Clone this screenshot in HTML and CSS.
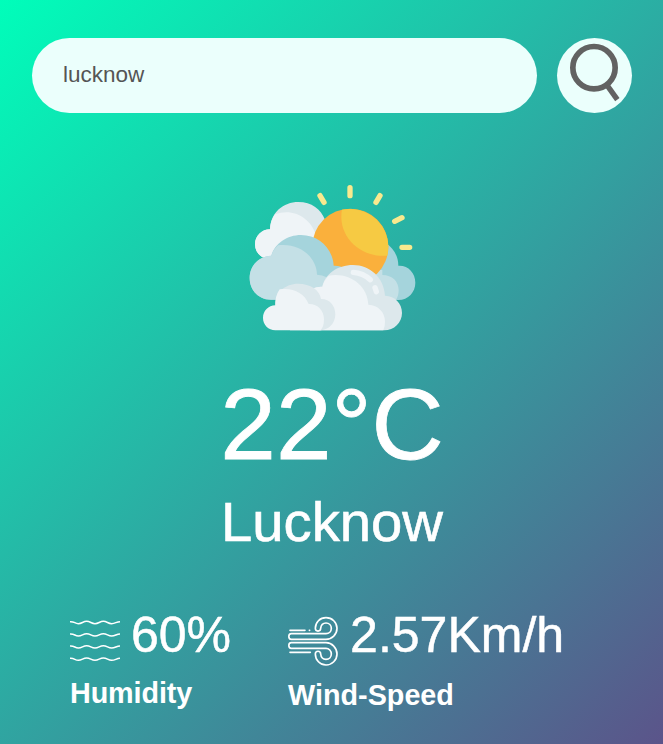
FILE: index.html
```html
<!DOCTYPE html>
<html lang="en">
<head>
<meta charset="utf-8">
<title>Weather</title>
<link rel="stylesheet" href="styles.css">
</head>
<body>
<main class="card">
  <div class="search">
    <input class="search-input" type="text" value="lucknow" aria-label="City" spellcheck="false">
    <button class="search-button" aria-label="Search">
      <svg viewBox="0 0 225 225" fill="none" stroke="#626262">
        <circle cx="111" cy="89" r="63.5" stroke-width="17"/>
        <path d="M151 143L181 185" stroke-width="16"/>
      </svg>
    </button>
  </div>
  <section class="weather">
    <svg class="weather-icon" viewBox="0 0 555 495">
      <g stroke="#f8e98e" stroke-width="16" stroke-linecap="round">
        <path d="M330 38V62M240 62L252 82M420 62L408 82M464 139L486 128M486 217H509"/>
      </g>
      <path fill="#dde8ec" d="M90 163C92 112 130 81 175 81C215 81 243 103 255 134L230 250H75C56 242 45 228 45 208C45 182 66 163 90 163Z"/>
      <path fill="#eff4f7" d="M90 163C91 145 96 130 105 118C157 98 211 126 228 180V250H75C56 242 45 228 45 208C45 182 66 163 90 163Z"/>
      <path fill="#a5d4dc" d="M435 203C460 217 475 243 475 272C504 270 526 293 526 323C526 351 505 375 475 375H400V203Z"/>
      <path fill="#c4e0e6" d="M427 285V300C457 300 476 320 476 345C476 357 473 367 468 375H400V285Z"/>
      <circle cx="331" cy="215" r="114" fill="#fab03c"/>
      <path fill="#f6ca43" d="M306 104C374 91 443 139 445 214Q445 229 442 242C365 249 304 192 304 126Q304 113 306 104Z"/>
      <path fill="#a5d4dc" d="M94 242C104 205 142 180 183 180C235 180 278 219 281 272Q301 271 315 281L300 374H93C57 374 29 347 29 309C29 271 58 243 94 242Z"/>
      <path fill="#c4e0e6" d="M94 242C98 229 105 219 114 211C180 203 230 247 231 299Q247 300 260 307L250 374H93C57 374 29 347 29 309C29 271 58 243 94 242Z"/>
      <path fill="#dde8ec" d="M217 341Q231 334 247 335C254 298 292 270 339 270C390 270 432 308 435 362C465 363 486 385 486 414C486 443 462 466 433 466H210Z"/>
      <path fill="#eff4f7" d="M217 341Q231 334 247 335Q252 315 266 302C329 291 383 332 385 389C415 390 435 412 435 440Q435 455 430 466H210Z"/>
      <path fill="#dde8ec" d="M106 391C105 352 136 326 174 326C212 326 239 345 243 372C268 371 286 391 286 418C286 446 265 466 239 466H150Z"/>
      <path fill="#eff4f7" d="M106 391Q105 363 119 343C158 337 193 353 206 387C233 386 252 406 252 433Q252 454 242 466H106C85 466 69 449 69 429C69 407 85 392 106 391Z"/>
      <path d="M340 292Q369 294 391 314M405 338L409 350" fill="none" stroke="#eff4f7" stroke-width="16" stroke-linecap="round"/>
    </svg>
    <h1 class="temp">22°C</h1>
    <h2 class="city">Lucknow</h2>
  </section>
  <section class="details">
    <div class="detail humidity">
      <svg class="detail-icon" viewBox="0 0 150 150" fill="none" stroke="#fff" stroke-width="4.5">
        <path d="M0 17C14 16 14 23 25 23S39 16 50 16S64 23 75 23S89 16 100 16S114 23 125 23S139 17 150 17"/>
        <path d="M0 54C14 53 14 60 25 60S39 53 50 53S64 60 75 60S89 53 100 53S114 60 125 60S139 54 150 54"/>
        <path d="M0 90C14 89 14 96 25 96S39 89 50 89S64 96 75 96S89 89 100 89S114 96 125 96S139 90 150 90"/>
        <path d="M0 127C14 126 14 133 25 133S39 126 50 126S64 133 75 133S89 126 100 126S114 133 125 133S139 127 150 127"/>
      </svg>
      <p class="value">60%</p>
      <p class="label">Humidity</p>
    </div>
    <div class="detail wind">
      <svg class="detail-icon" viewBox="0 0 150 150" fill="none" stroke="#fff" stroke-width="5" stroke-linecap="round">
        <path d="M6 43H51M64 43H65M6 109H67"/>
        <path d="M10 53H114C123 53 130 46 130 37S123 21 114 21S99 28 98 37C98 48 82 48 82 37C82 19 96 5 114 5S147 19 147 37S132 70 114 70H10C0 70 0 53 10 53Z"/>
        <path d="M10 80H114C132 80 147 96 147 114S132 147 114 147S82 132 82 114C82 103 98 103 98 114C99 123 105 130 114 130S130 123 130 114S123 97 114 97H10C0 97 0 80 10 80Z"/>
      </svg>
      <p class="value">2.57Km/h</p>
      <p class="label">Wind-Speed</p>
    </div>
  </section>
</main>
</body>
</html>
```
FILE: styles.css
```css
* {
  box-sizing: border-box;
  margin: 0;
  padding: 0;
  font-family: "Liberation Sans", Arial, sans-serif;
}

.card {
  height: 744px;
  padding: 38px 31px 0 32px;
  overflow: hidden;
  color: #fff;
  background: linear-gradient(135deg, #00feba, #5b548a);
}

.search {
  display: flex;
  gap: 20px;
}

.search-input {
  flex: 1;
  min-width: 0;
  height: 75px;
  padding: 0 31px 1px;
  border: 0;
  outline: 0;
  border-radius: 38px;
  background: #ebfffc;
  color: #555;
  font-size: 22.5px;
}

.search-button {
  width: 75px;
  height: 75px;
  border: 0;
  border-radius: 50%;
  background: #ebfffc;
}

.search-button svg {
  display: block;
  width: 75px;
  height: 75px;
}

.weather {
  display: flex;
  flex-direction: column;
  align-items: center;
  padding-top: 62px;
}

.weather-icon {
  width: 185px;
  height: 165px;
}

.temp {
  margin-top: 34px;
  font-size: 100px;
  font-weight: 500;
  line-height: 100px;
  -webkit-text-stroke: 0.8px #fff;
}

.city {
  margin-top: 20px;
  font-size: 56.25px;
  font-weight: 400;
  line-height: 56px;
  -webkit-text-stroke: 0.6px #fff;
}

.details {
  display: flex;
  gap: 57px;
  margin-top: 60px;
  padding-left: 38px;
}

.detail {
  display: grid;
  grid-template-columns: 50px auto;
  column-gap: 12px;
  align-content: start;
}

.humidity {
  column-gap: 11px;
}

.detail-icon {
  width: 50px;
  height: 50px;
  margin-top: 6px;
}

.value {
  font-size: 50px;
  line-height: 50px;
  -webkit-text-stroke: 0.5px #fff;
}

.label {
  grid-column: 1 / -1;
  margin-top: 12px;
  font-size: 28.75px;
  font-weight: 700;
  line-height: 30px;
}

.humidity .label {
  letter-spacing: -0.1px;
}

.wind .label {
  margin-top: 14px;
}
```
